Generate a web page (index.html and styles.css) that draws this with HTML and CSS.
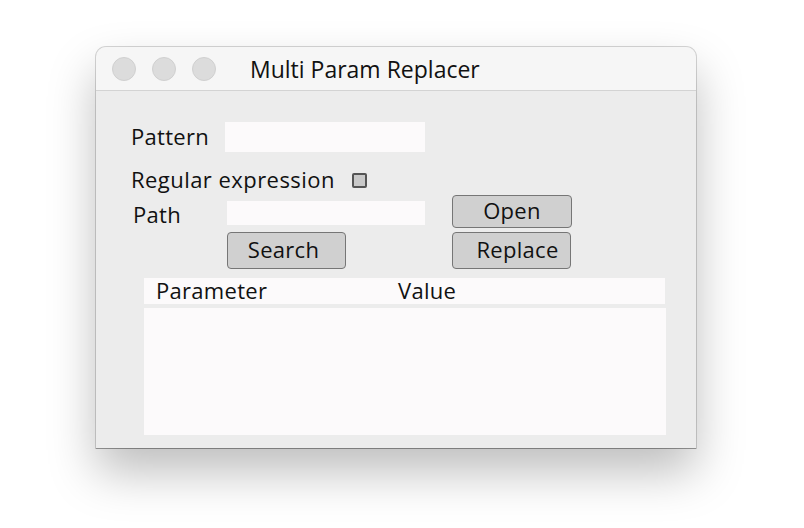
FILE: index.html
```html
<!DOCTYPE html>
<html>
<head>
<meta charset="utf-8">
<link rel="stylesheet" href="styles.css">
</head>
<body>
<div class="window">
  <div class="titlebar">
    <span class="light"></span>
    <span class="light"></span>
    <span class="light"></span>
    <span class="title">Multi Param Replacer</span>
  </div>
  <div class="content">
    <div class="row row-pattern">
      <span class="label">Pattern</span>
      <span class="input input-pattern"></span>
    </div>
    <div class="row row-regex">
      <span class="label label-regex">Regular expression</span>
      <span class="checkbox"></span>
    </div>
    <div class="row row-path">
      <span class="label label-path">Path</span>
      <span class="input input-path"></span>
      <span class="button btn-open">Open</span>
    </div>
    <div class="row row-actions">
      <span class="button btn-search">Search</span>
      <span class="button btn-replace">Replace</span>
    </div>
    <div class="table">
      <div class="thead">
        <span class="col col-param">Parameter</span>
        <span class="col col-value">Value</span>
      </div>
      <div class="tbody"></div>
    </div>
  </div>
</div>
</body>
</html>
```
FILE: styles.css
```css
html, body {
  margin: 0;
  padding: 0;
  background: #ffffff;
}
body {
  width: 804px;
  height: 528px;
  overflow: hidden;
  font-family: "Open Sans", "Noto Sans", sans-serif;
  color: #111;
  padding-top: 47px;
  box-sizing: border-box;
}
.window {
  margin-left: 96px;
  width: 600px;
  height: 401px;
  background: #ececec;
  border-radius: 10px 10px 0 0;
  box-shadow: 0 0 0 1px rgba(0,0,0,0.16), 0 1px 0 rgba(0,0,0,0.25), 0 24px 48px rgba(0,0,0,0.26);
  display: flex;
  flex-direction: column;
}
.titlebar {
  height: 43px;
  background: #f6f6f6;
  border-bottom: 1px solid #d3d3d3;
  border-radius: 10px 10px 0 0;
  display: flex;
  align-items: center;
  padding-left: 16px;
  gap: 16px;
  box-sizing: content-box;
}
.light {
  width: 22px;
  height: 22px;
  border-radius: 50%;
  background: #dcdcdc;
  border: 1px solid #d0d0d0;
}
.title {
  margin-left: 18px;
  font-size: 23px;
  line-height: 30px;
  color: #111;
}
.content {
  padding-left: 35px;
  padding-top: 31px;
  display: flex;
  flex-direction: column;
}
.row {
  display: flex;
}
.label {
  font-size: 22px;
  line-height: 28px;
  white-space: nowrap;
  letter-spacing: 0.3px;
  padding-bottom: 2px;
}
.row-pattern {
  height: 30px;
  align-items: center;
}
.row-pattern .label {
  width: 94px;
}
.input {
  background: #fcfafb;
}
.input-pattern {
  width: 200px;
  height: 30px;
}
.row-regex {
  margin-top: 14px;
  height: 28px;
  align-items: center;
}
.label-regex {
  width: 221px;
  letter-spacing: 0.45px;
}
.checkbox {
  width: 11px;
  height: 11px;
  border: 2px solid #555;
  border-radius: 2px;
  background: #c9c9c9;
}
.row-path {
  margin-top: 1px;
  height: 33px;
}
.label-path {
  margin-left: 2px;
  width: 94px;
  margin-top: 5px;
}
.input-path {
  width: 198px;
  height: 24px;
  margin-top: 6px;
}
.button {
  box-sizing: border-box;
  background: #d0d0d0;
  border: 1px solid #767676;
  border-radius: 4px;
  font-size: 22px;
  letter-spacing: 0.3px;
  display: flex;
  align-items: center;
  justify-content: center;
  color: #111;
  padding-bottom: 4px;
}
.btn-open {
  margin-left: 27px;
  width: 120px;
  height: 33px;
  line-height: 28px;
}
.row-actions {
  margin-top: 4px;
  height: 37px;
  padding-left: 96px;
}
.btn-search {
  width: 119px;
  height: 37px;
  padding-right: 6px;
}
.btn-replace {
  margin-left: 106px;
  width: 119px;
  height: 37px;
  padding-left: 12px;
}
.table {
  margin-top: 9px;
  margin-left: 13px;
  width: 522px;
  display: flex;
  flex-direction: column;
  gap: 4px;
}
.thead {
  height: 26px;
  background: #fcfafb;
  display: flex;
  align-items: center;
  font-size: 22px;
  line-height: 24px;
  letter-spacing: 0.3px;
  padding-bottom: 2px;
  box-sizing: border-box;
  width: 521px;
}
.col-param {
  margin-left: 12px;
  width: 242px;
}
.tbody {
  height: 127px;
  background: #fcfafb;
}
```
